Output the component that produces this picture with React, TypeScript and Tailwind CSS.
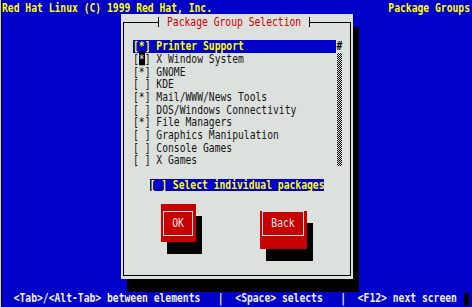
import type { ReactNode } from "react"

type Item = { on: boolean; label: string }

const items: Item[] = [
  { on: true, label: "Printer Support" },
  { on: true, label: "X Window System" },
  { on: true, label: "GNOME" },
  { on: false, label: "KDE" },
  { on: true, label: "Mail/WWW/News Tools" },
  { on: false, label: "DOS/Windows Connectivity" },
  { on: true, label: "File Managers" },
  { on: false, label: "Graphics Manipulation" },
  { on: false, label: "Console Games" },
  { on: false, label: "X Games" },
]

// glyphs in the reference are taller than DejaVu's, stretch them a bit
function T({ children, className = "" }: { children: ReactNode; className?: string }) {
  return <span className={`inline-block scale-y-[1.25] whitespace-pre ${className}`}>{children}</span>
}

function Button({ label, width }: { label: string; width: string }) {
  return (
    <div className={`h-[38px] ${width} bg-[#c80000] shadow-[6px_12px_0_0_#000]`}>
      <div className="ml-[2px] mr-[3px] mt-[7px] flex h-[25px] items-center justify-center border border-[#e4e4e4] pb-[2px] text-[#ececec]">
        <T>{label}</T>
      </div>
    </div>
  )
}

export default function App() {
  return (
    <div className="flex h-[307px] w-[472px] overflow-hidden bg-[#0000c8] font-['DejaVu_Sans_Mono',monospace] text-[9.7px] leading-none">
      <div className="w-px bg-[#cfcfcf]" />
      <div className="w-px bg-black" />
      <div className="flex w-[470px] flex-col">
        <div className="flex h-[14px] items-center justify-between pr-[2px] pt-[2px] font-bold text-[#ffff00]">
          <T>Red Hat Linux (C) 1999 Red Hat, Inc.</T>
          <T>Package Groups</T>
        </div>

        <div className="h-[278px] pl-[119px]">
          <div className="h-[265px] w-[232px] bg-[#dde1dd] pl-[2px] pt-[8px] shadow-[6px_13px_0_0_#000]">
            <div className="relative h-[254px] w-[228px] border border-black">
              <div className="absolute -top-[6px] left-[34px] flex h-[10px] items-center">
                <div className="h-full w-px bg-black" />
                <span className="bg-[#dde1dd] px-[8px] text-[#c80000]">
                  <T>Package Group Selection</T>
                </span>
                <div className="h-full w-px bg-black" />
              </div>

              <div className="flex pl-[9px] pt-[17px]">
                <div className="w-[203px]">
                  {items.map((it, i) => (
                    <div
                      key={it.label}
                      className={`flex h-[12.65px] items-center ${
                        i === 0 ? "bg-[#0000c8] font-bold text-[#ffff00]" : "text-[#141414]"
                      }`}
                    >
                      {i === 1 ? (
                        <T>
                          [<span className="bg-black text-[#dde1dd]">*</span>] {it.label}
                        </T>
                      ) : (
                        <T>{`[${it.on ? "*" : " "}] ${it.label}`}</T>
                      )}
                    </div>
                  ))}
                </div>
                <div className="ml-[1px] flex w-[5px] flex-col">
                  <div className="flex h-[12.65px] items-center justify-center font-bold text-black">
                    <T>#</T>
                  </div>
                  <div className="h-[113.85px] bg-[repeating-conic-gradient(#000_0_25%,#dde1dd_0_50%)] bg-[length:2px_2px]" />
                </div>
              </div>

              <div className="mt-[12.5px] flex justify-center">
                <div className="flex h-[12px] items-center bg-[#0000c8] font-bold text-[#ffff00]">
                  <T>[ ] Select individual packages</T>
                </div>
              </div>

              <div className="mt-[13px] flex pl-[37px]">
                <Button label="OK" width="w-[35px]" />
                <div className="ml-[64px]">
                  <Button label="Back" width="w-[47px]" />
                </div>
              </div>
            </div>
          </div>
        </div>

        <div className="flex h-[15px] items-center justify-between pb-[3px] font-bold text-[#f0f0f0]">
          <T>{"  <Tab>/<Alt-Tab> between elements   |  <Space> selects   |  <F12> next screen"}</T>
          <div className="mr-[3px] mt-[2px] h-[13px] w-[5px] bg-black" />
        </div>
      </div>
    </div>
  )
}
